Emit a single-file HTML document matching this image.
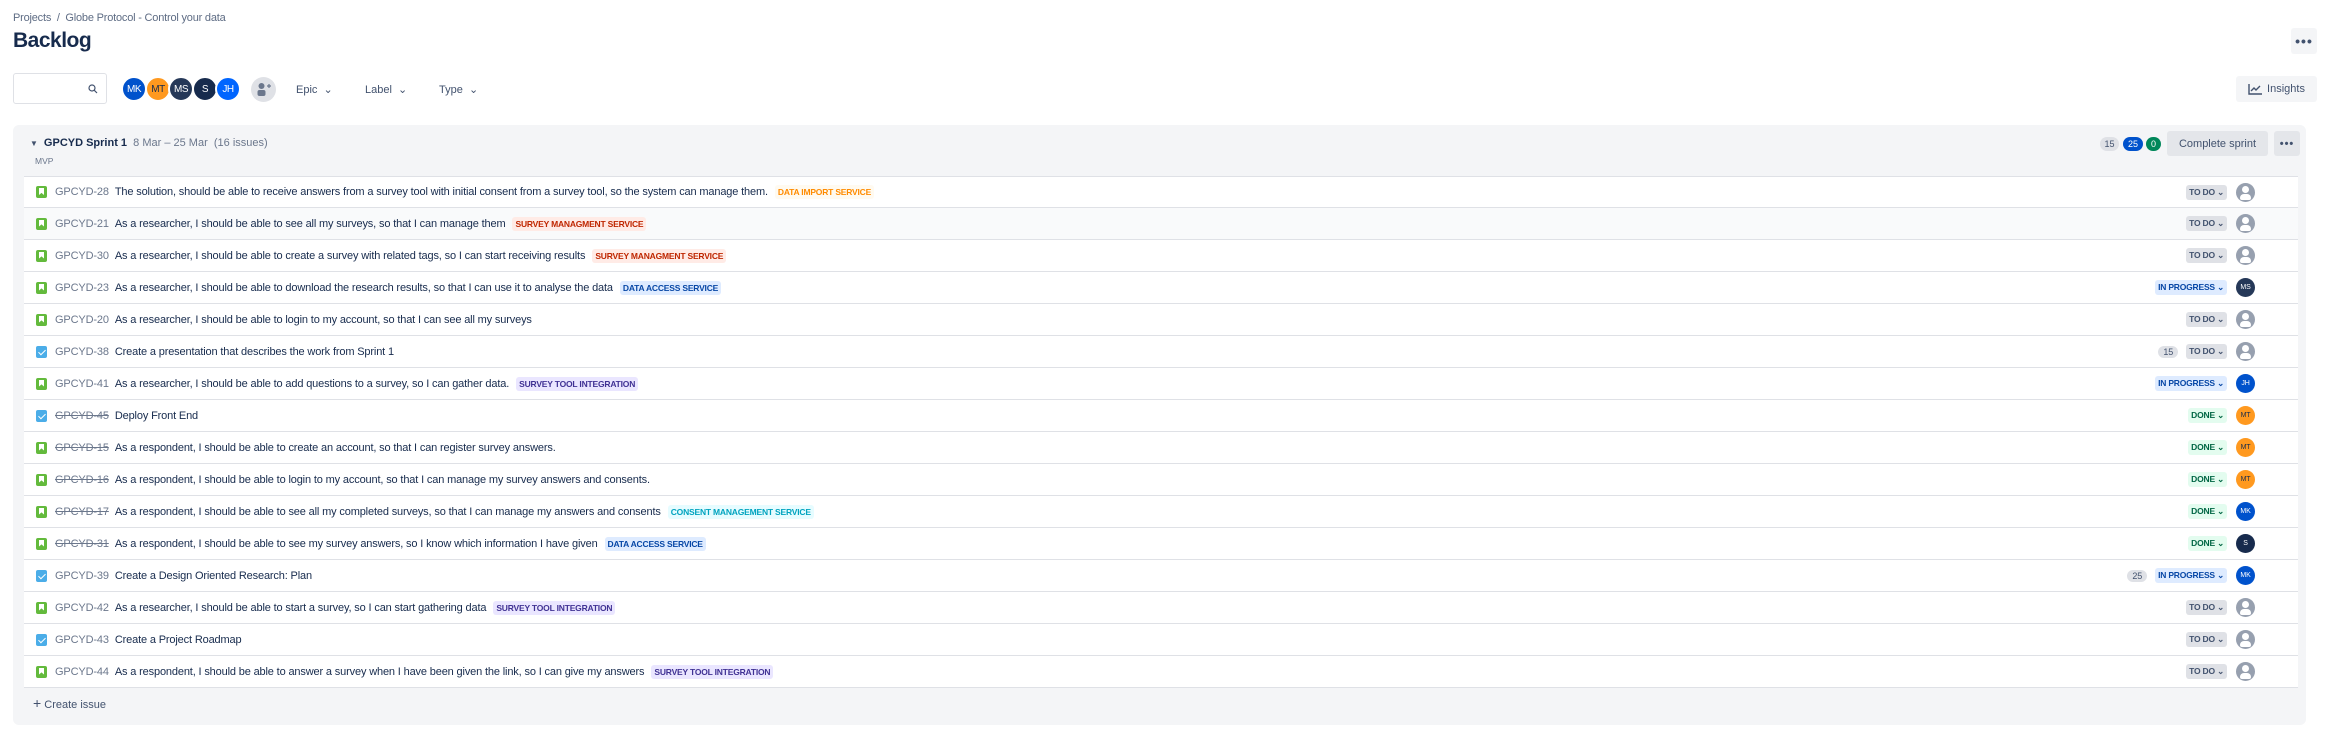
<!DOCTYPE html>
<html><head><meta charset="utf-8"><style>
*{box-sizing:border-box;margin:0;padding:0}
body{width:2334px;height:737px;background:#fff;font-family:"Liberation Sans",sans-serif;color:#172b4d;position:relative;overflow:hidden}
.abs{position:absolute}
.crumb{left:13px;top:12px;font-size:11px;color:#5e6c84;letter-spacing:-0.2px}
.title{left:13px;top:29px;font-size:21px;font-weight:bold;letter-spacing:-0.5px}
.btn{background:#f4f5f7;border-radius:3px;display:flex;align-items:center;justify-content:center;color:#42526e}
.search{left:13px;top:73px;width:94px;height:31px;border:1.5px solid #dfe1e6;border-radius:3px}
.av{position:absolute;width:26px;height:26px;border-radius:50%;border:2px solid #fff;color:#fff;font-size:10px;display:flex;align-items:center;justify-content:center;letter-spacing:-0.5px}
.filt{font-size:11px;color:#42526e;top:83px}
.sprint{left:13px;top:125px;width:2293px;height:600px;background:#f4f5f7;border-radius:6px}
.row{position:absolute;left:24px;width:2274px;height:32px;background:#fff;border-bottom:1px solid #dfe1e6;display:flex;align-items:center;font-size:11px;letter-spacing:-0.15px}
.ic{width:11px;height:12px;border-radius:2px;margin-left:12px;margin-right:8px;position:relative}
.story{background:#63ba3c}
.story:after{content:"";position:absolute;left:3px;top:2px;width:5px;height:7px;background:#fff;clip-path:polygon(0 0,100% 0,100% 100%,50% 70%,0 100%)}
.task{background:#4bade8}
.task:after{content:"";position:absolute;left:4px;top:2px;width:3px;height:6px;border-right:1.5px solid #fff;border-bottom:1.5px solid #fff;transform:rotate(45deg)}
.id{color:#6b778c;margin-right:6px}
.done .id{text-decoration:line-through}
.lab{font-size:8.5px;font-weight:bold;padding:2px 3px;border-radius:3px;margin-left:7px;letter-spacing:-0.2px}
.l-or{color:#ff8b00;background:#fffaf0}
.l-red{color:#bf2600;background:#ffebe6}
.l-blue{color:#0747a6;background:#deebff}
.l-pur{color:#403294;background:#eae6ff}
.l-cy{color:#00a3bf;background:#e6fcff}
.right{position:absolute;right:71px;display:flex;align-items:center;gap:8px}
.st{font-size:8.5px;font-weight:bold;padding:2px 3px;border-radius:3px;letter-spacing:-0.2px}
.todo{background:#dfe1e6;color:#42526e}
.prog{background:#deebff;color:#0747a6}
.dn{background:#e3fcef;color:#006644}
.pts{background:#dfe1e6;color:#42526e;font-size:9px;border-radius:8px;padding:1px 5px}
.ra{position:absolute;right:43px;width:19px;height:19px;border-radius:50%;color:#fff;font-size:7px;display:flex;align-items:center;justify-content:center}
.un{background:#97a0af}
.un:before{content:"";position:absolute;left:6px;top:3px;width:7px;height:7px;border-radius:50%;background:#fff}
.un:after{content:"";position:absolute;left:4px;top:11px;width:11px;height:6px;border-radius:4px 4px 2px 2px;background:#fff}
</style></head><body>
<div class="abs crumb">Projects &nbsp;/&nbsp; Globe Protocol - Control your data</div>
<div class="abs title">Backlog</div>
<div class="abs btn" style="left:2291px;top:28px;width:26px;height:26px;font-size:14px;font-weight:bold;letter-spacing:1px">•••</div>
<div class="abs search"><svg class="abs" style="left:74px;top:10px" width="10" height="10" viewBox="0 0 10 10"><circle cx="4" cy="4" r="3" fill="none" stroke="#42526e" stroke-width="1.2"/><path d="M6.3 6.3L9 9" stroke="#42526e" stroke-width="1.2"/></svg></div>
<div class="av" style="left:121px;top:76px;background:#0052cc">MK</div>
<div class="av" style="left:145px;top:76px;background:#ff991f;color:#172b4d">MT</div>
<div class="av" style="left:168px;top:76px;background:#253858">MS</div>
<div class="av" style="left:192px;top:76px;background:#172b4d">S</div>
<div class="av" style="left:215px;top:76px;background:#0065ff">JH</div>
<div class="abs" style="left:251px;top:77px;width:25px;height:25px;border-radius:50%;background:#dfe1e6"><svg width="25" height="25" viewBox="0 0 25 25"><circle cx="10.5" cy="9" r="3" fill="#6b778c"/><rect x="6.5" y="13" width="8" height="6" rx="2" fill="#6b778c"/><path d="M16 9h4M18 7v4" stroke="#6b778c" stroke-width="1.2"/></svg></div>
<div class="abs filt" style="left:296px">Epic &nbsp;⌄</div>
<div class="abs filt" style="left:365px">Label &nbsp;⌄</div>
<div class="abs filt" style="left:439px">Type &nbsp;⌄</div>
<div class="abs btn" style="left:2236px;top:76px;width:81px;height:26px;font-size:11px"><svg width="14" height="11" viewBox="0 0 14 11" style="margin-right:5px"><path d="M1 0v10h13M3 7l3-3 2 2 4-4" fill="none" stroke="#42526e" stroke-width="1.4"/></svg>Insights</div>
<div class="abs sprint"></div>
<div class="abs" style="left:30px;top:137px;font-size:11px;color:#42526e"><span style="font-size:8px;margin-right:6px">▼</span><b style="color:#172b4d">GPCYD Sprint 1</b> <span style="color:#6b778c">&nbsp;8 Mar – 25 Mar &nbsp;(16 issues)</span></div>
<div class="abs" style="left:35px;top:156px;font-size:8.5px;color:#6b778c">MVP</div>
<div class="abs" style="left:2100px;top:137px;width:19px;height:14px;border-radius:7px;background:#dfe1e6;color:#42526e;font-size:9px;text-align:center;line-height:14px">15</div>
<div class="abs" style="left:2123px;top:137px;width:20px;height:14px;border-radius:7px;background:#0052cc;color:#fff;font-size:9px;text-align:center;line-height:14px">25</div>
<div class="abs" style="left:2146px;top:137px;width:15px;height:14px;border-radius:7px;background:#00875a;color:#fff;font-size:9px;text-align:center;line-height:14px">0</div>
<div class="abs btn" style="left:2167px;top:131px;width:101px;height:25px;background:#e4e6ea;font-size:11px">Complete sprint</div>
<div class="abs btn" style="left:2274px;top:131px;width:26px;height:25px;background:#e4e6ea;font-size:11px;font-weight:bold;letter-spacing:1px">•••</div>

<div class="row" style="top:176px;border-top:1px solid #dfe1e6"><span class="ic story"></span><span class="id">GPCYD-28</span>The solution, should be able to receive answers from a survey tool with initial consent from a survey tool, so the system can manage them.<span class="lab l-or">DATA IMPORT SERVICE</span><div class="right"><span class="st todo">TO DO ⌄</span></div><div class="ra un"></div></div>
<div class="row" style="top:208px;background:#f9fafb"><span class="ic story"></span><span class="id">GPCYD-21</span>As a researcher, I should be able to see all my surveys, so that I can manage them<span class="lab l-red">SURVEY MANAGMENT SERVICE</span><div class="right"><span class="st todo">TO DO ⌄</span></div><div class="ra un"></div></div>
<div class="row" style="top:240px"><span class="ic story"></span><span class="id">GPCYD-30</span>As a researcher, I should be able to create a survey with related tags, so I can start receiving results<span class="lab l-red">SURVEY MANAGMENT SERVICE</span><div class="right"><span class="st todo">TO DO ⌄</span></div><div class="ra un"></div></div>
<div class="row" style="top:272px"><span class="ic story"></span><span class="id">GPCYD-23</span>As a researcher, I should be able to download the research results, so that I can use it to analyse the data<span class="lab l-blue">DATA ACCESS SERVICE</span><div class="right"><span class="st prog">IN PROGRESS ⌄</span></div><div class="ra" style="background:#253858">MS</div></div>
<div class="row" style="top:304px"><span class="ic story"></span><span class="id">GPCYD-20</span>As a researcher, I should be able to login to my account, so that I can see all my surveys<div class="right"><span class="st todo">TO DO ⌄</span></div><div class="ra un"></div></div>
<div class="row" style="top:336px"><span class="ic task"></span><span class="id">GPCYD-38</span>Create a presentation that describes the work from Sprint 1<div class="right"><span class="pts">15</span><span class="st todo">TO DO ⌄</span></div><div class="ra un"></div></div>
<div class="row" style="top:368px"><span class="ic story"></span><span class="id">GPCYD-41</span>As a researcher, I should be able to add questions to a survey, so I can gather data.<span class="lab l-pur">SURVEY TOOL INTEGRATION</span><div class="right"><span class="st prog">IN PROGRESS ⌄</span></div><div class="ra" style="background:#0052cc">JH</div></div>
<div class="row done" style="top:400px"><span class="ic task"></span><span class="id">GPCYD-45</span>Deploy Front End<div class="right"><span class="st dn">DONE ⌄</span></div><div class="ra" style="background:#ff991f;color:#172b4d">MT</div></div>
<div class="row done" style="top:432px"><span class="ic story"></span><span class="id">GPCYD-15</span>As a respondent, I should be able to create an account, so that I can register survey answers.<div class="right"><span class="st dn">DONE ⌄</span></div><div class="ra" style="background:#ff991f;color:#172b4d">MT</div></div>
<div class="row done" style="top:464px"><span class="ic story"></span><span class="id">GPCYD-16</span>As a respondent, I should be able to login to my account, so that I can manage my survey answers and consents.<div class="right"><span class="st dn">DONE ⌄</span></div><div class="ra" style="background:#ff991f;color:#172b4d">MT</div></div>
<div class="row done" style="top:496px"><span class="ic story"></span><span class="id">GPCYD-17</span>As a respondent, I should be able to see all my completed surveys, so that I can manage my answers and consents<span class="lab l-cy">CONSENT MANAGEMENT SERVICE</span><div class="right"><span class="st dn">DONE ⌄</span></div><div class="ra" style="background:#0052cc">MK</div></div>
<div class="row done" style="top:528px"><span class="ic story"></span><span class="id">GPCYD-31</span>As a respondent, I should be able to see my survey answers, so I know which information I have given<span class="lab l-blue">DATA ACCESS SERVICE</span><div class="right"><span class="st dn">DONE ⌄</span></div><div class="ra" style="background:#172b4d">S</div></div>
<div class="row" style="top:560px"><span class="ic task"></span><span class="id">GPCYD-39</span>Create a Design Oriented Research: Plan<div class="right"><span class="pts">25</span><span class="st prog">IN PROGRESS ⌄</span></div><div class="ra" style="background:#0052cc">MK</div></div>
<div class="row" style="top:592px"><span class="ic story"></span><span class="id">GPCYD-42</span>As a researcher, I should be able to start a survey, so I can start gathering data<span class="lab l-pur">SURVEY TOOL INTEGRATION</span><div class="right"><span class="st todo">TO DO ⌄</span></div><div class="ra un"></div></div>
<div class="row" style="top:624px"><span class="ic task"></span><span class="id">GPCYD-43</span>Create a Project Roadmap<div class="right"><span class="st todo">TO DO ⌄</span></div><div class="ra un"></div></div>
<div class="row" style="top:656px"><span class="ic story"></span><span class="id">GPCYD-44</span>As a respondent, I should be able to answer a survey when I have been given the link, so I can give my answers<span class="lab l-pur">SURVEY TOOL INTEGRATION</span><div class="right"><span class="st todo">TO DO ⌄</span></div><div class="ra un"></div></div>
<div class="abs" style="left:33px;top:695px;font-size:11px;color:#42526e"><span style="font-size:14px">+</span> Create issue</div>
</body></html>
